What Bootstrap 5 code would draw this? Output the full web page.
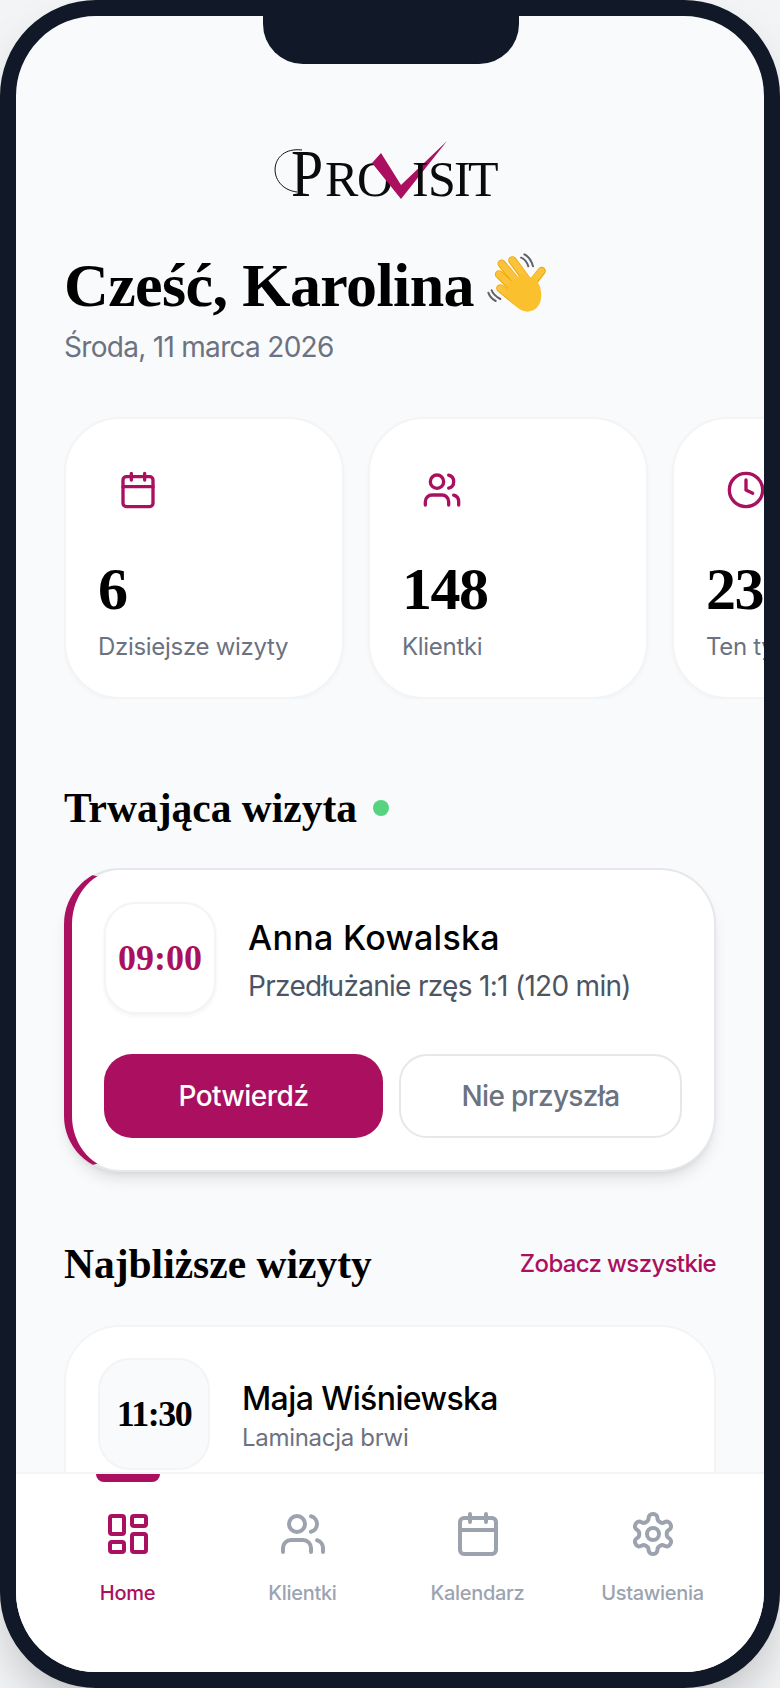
<!DOCTYPE html>
<html lang="pl">
<head>
<meta charset="utf-8">
<title>Provisit</title>
<link href="https://cdn.jsdelivr.net/npm/bootstrap@5.3.0/dist/css/bootstrap.min.css" rel="stylesheet">
<style>
:root{--brand:#ab0f5f;--sans:"Inter","Noto Sans",sans-serif;--serif:"Liberation Serif",serif;}
html,body{margin:0;height:100%;background:#f3f4f6;overflow:hidden;}
.phone{position:relative;width:780px;height:1688px;border:16px solid #111827;border-radius:96px;background:#f9fafb;box-shadow:0 25px 50px -12px rgba(0,0,0,.25);overflow:hidden;font-family:var(--sans);color:#000;}
.notch{position:absolute;top:0;left:247px;width:256px;height:48px;background:#111827;border-radius:0 0 40px 40px;z-index:5;}
.scroll-area{flex:1 1 0;min-height:0;overflow:hidden;padding:114px 48px 0 48px;}
.logo{display:block;margin:0 0 39px 196px;width:250px;height:80px;}
.logo-ink{font-family:var(--serif);fill:#0b0b0b;}
.hello{font-family:var(--serif);font-weight:700;font-size:62px;line-height:72px;margin:0;letter-spacing:-.6px;}
.hand{width:90px;height:80px;margin:-8px 0 0 -3px;flex:none;}
.dateline{font-size:28px;line-height:40px;color:#6b7280;margin:6px 0 50px;letter-spacing:-.7px;}
.stats{margin-right:-48px;gap:24px;overflow:hidden;}
.stat-tile{flex:0 0 280px;height:282px;border:2px solid #f3f4f6;border-radius:56px;padding:32px;box-shadow:0 2px 4px rgba(0,0,0,.03);background:#fff;}
.stat-ico{width:80px;height:80px;}
.stat-num{font-family:var(--serif);font-weight:700;font-size:60px;line-height:72px;margin-top:25px;letter-spacing:-1.5px;}
.stat-lbl{font-size:24px;line-height:36px;color:#6b7280;margin-top:4px;white-space:nowrap;letter-spacing:-.3px;}
.sec-title{font-family:var(--serif);font-weight:700;font-size:41.5px;line-height:48px;margin:0;}
.sec-live{margin-top:85px;margin-bottom:36px;gap:16px;}
.live-dot{width:16px;height:16px;border-radius:50%;background:#55d37f;}
.live-tile{border:2px solid #e5e7eb;border-left:8px solid var(--brand);border-radius:56px;padding:32px;height:304px;background:#fff;box-shadow:0 10px 15px -3px rgba(0,0,0,.1),0 4px 6px -4px rgba(0,0,0,.1);}
.time-box{flex:none;width:112px;height:112px;border-radius:32px;border:2px solid #f3f4f6;font-family:var(--serif);font-weight:700;font-size:36px;}
.time-live{background:#fff;color:var(--brand);box-shadow:0 2px 4px rgba(0,0,0,.05);}
.time-next{background:#f9fafb;color:#000;letter-spacing:-1.5px;}
.who{font-size:34px;line-height:44px;font-weight:500;letter-spacing:.3px;}
.what{font-size:28px;line-height:40px;color:#4b5563;letter-spacing:-.7px;margin-top:6px;}
.info{margin-top:6px;}
.act-row{gap:16px;margin-top:40px;}
.act{flex:1 1 0;height:84px;border-radius:28px;font-size:28px;font-weight:500;letter-spacing:-.5px;display:flex;align-items:center;justify-content:center;padding:0;}
.act-main,.act-main:hover{background:var(--brand);border:0;color:#fff;}
.act-ghost,.act-ghost:hover{background:#fff;border:2px solid #e5e7eb;color:#6b7280;letter-spacing:-.65px;}
.sec-next{margin-top:68px;margin-bottom:37px;}
.see-all{font-size:24px;font-weight:500;color:var(--brand);text-decoration:none;letter-spacing:-.65px;}
.next-tile{border:2px solid #f3f4f6;border-radius:56px;padding:31px 32px;background:#fff;height:200px;}
.next-tile .sec-title{letter-spacing:-.2px;}
.who-sm{font-size:32px;line-height:42px;font-weight:500;letter-spacing:-.6px;}
.what-sm{font-size:24px;line-height:36px;color:#6b7280;letter-spacing:-.3px;}
.info-sm{margin-top:6px;}
.tabbar{flex:none;height:200px;background:#fff;border-top:2px solid #f3f4f6;padding:0 24px;}
.tab{position:relative;flex:1 1 0;color:#9ca3af;text-decoration:none;padding-top:36px;}
.tab svg{display:block;margin:0 auto;}
.tab-lbl{display:block;text-align:center;font-size:20px;line-height:28px;font-weight:500;margin-top:21px;letter-spacing:-.3px;}
.tab-on{color:var(--brand);}
.tab-mark{position:absolute;top:0;left:56px;width:64px;height:8px;background:var(--brand);border-radius:0 0 8px 8px;}
svg.ln{fill:none;stroke:currentColor;stroke-width:2;stroke-linecap:round;stroke-linejoin:round;}
.brand-ink{color:var(--brand);}
</style>
</head>
<body>
<div class="phone d-flex flex-column">
  <div class="notch"></div>
  <main class="scroll-area">
    <svg class="logo" viewBox="0 0 250 80">
      <path d="M42 20C8 16 6 58 37 62" fill="none" stroke="#111" stroke-width="1"/>
      <text class="logo-ink" transform="translate(31 66) scale(.85 1)" font-size="68">P</text>
      <text class="logo-ink" x="65 97" y="66" font-size="50">RO</text>
      <polygon points="112,33 121,23 141,55 187,11 141,69" fill="#ab0f5f"/>
      <text class="logo-ink" x="152 168 194 208" y="66" font-size="50">ISIT</text>
    </svg>
    <div class="d-flex align-items-center">
      <h1 class="hello">Cześć, Karolina</h1>
      <svg class="hand" viewBox="0 0 270 240" role="img" aria-label="👋">
        <g fill="none" stroke-linecap="round">
          <g stroke="#5f6368" stroke-width="6"><path d="M150 50Q165 55 172 76"/><path d="M160 40Q178 48 186 76"/><path d="M52 155Q58 172 74 180"/><path d="M62 148Q66 162 88 174"/></g>
          <g stroke="#eda600" stroke-width="25"><path d="M136 122L92 68"/><path d="M168 118L124 58"/><path d="M130 145L84 100"/><path d="M135 180L88 142"/><path d="M182 128L212 90"/></g>
          <g stroke="#fbc23c" stroke-width="20"><path d="M136 120L92 68"/><path d="M168 116L124 58"/><path d="M130 143L84 100"/><path d="M135 178L88 142"/><path d="M182 126L211 90"/></g>
        </g>
        <path d="M112 130L150 100L195 115C222 150 215 210 170 212C145 210 125 190 105 165Z" fill="#fbc02d"/>
      </svg>
    </div>
    <p class="dateline">Środa, 11 marca 2026</p>

    <div class="stats d-flex">
      <div class="stat-tile card flex-column">
        <div class="stat-ico d-flex align-items-center justify-content-center brand-ink">
          <svg class="ln" width="40" height="40" viewBox="0 0 24 24"><rect x="3" y="4" width="18" height="18" rx="2"/><path d="M16 2v4M8 2v4M3 10h18"/></svg>
        </div>
        <div class="stat-num">6</div>
        <div class="stat-lbl">Dzisiejsze wizyty</div>
      </div>
      <div class="stat-tile card flex-column">
        <div class="stat-ico d-flex align-items-center justify-content-center brand-ink">
          <svg class="ln" width="40" height="40" viewBox="0 0 24 24"><path d="M16 21v-2a4 4 0 0 0-4-4H6a4 4 0 0 0-4 4v2"/><circle cx="9" cy="7" r="4"/><path d="M22 21v-2a4 4 0 0 0-3-3.87"/><path d="M16 3.13a4 4 0 0 1 0 7.75"/></svg>
        </div>
        <div class="stat-num">148</div>
        <div class="stat-lbl">Klientki</div>
      </div>
      <div class="stat-tile card flex-column">
        <div class="stat-ico d-flex align-items-center justify-content-center brand-ink">
          <svg class="ln" width="40" height="40" viewBox="0 0 24 24"><circle cx="12" cy="12" r="10"/><path d="M12 6v6l4 2"/></svg>
        </div>
        <div class="stat-num">23</div>
        <div class="stat-lbl">Ten tydzień</div>
      </div>
    </div>

    <div class="sec-live d-flex align-items-center">
      <h2 class="sec-title">Trwająca wizyta</h2>
      <span class="live-dot"></span>
    </div>
    <div class="live-tile card">
      <div class="d-flex align-items-center">
        <div class="time-box time-live d-flex align-items-center justify-content-center">09:00</div>
        <div class="info ms-4 ps-2">
          <div class="who">Anna Kowalska</div>
          <div class="what">Przedłużanie rzęs 1:1 (120 min)</div>
        </div>
      </div>
      <div class="act-row d-flex">
        <button type="button" class="btn act act-main">Potwierdź</button>
        <button type="button" class="btn act act-ghost">Nie przyszła</button>
      </div>
    </div>

    <div class="sec-next d-flex align-items-center justify-content-between">
      <h2 class="sec-title">Najbliższe wizyty</h2>
      <a href="#" class="see-all">Zobacz wszystkie</a>
    </div>
    <div class="next-tile card">
      <div class="d-flex align-items-center">
        <div class="time-box time-next d-flex align-items-center justify-content-center">11:30</div>
        <div class="info-sm ms-4 ps-2">
          <div class="who-sm">Maja Wiśniewska</div>
          <div class="what-sm">Laminacja brwi</div>
        </div>
      </div>
    </div>
  </main>
  <nav class="tabbar d-flex">
    <a href="#" class="tab tab-on">
      <span class="tab-mark"></span>
      <svg class="ln" width="48" height="48" viewBox="0 0 24 24"><rect x="3" y="3" width="7" height="9" rx="1"/><rect x="14" y="3" width="7" height="5" rx="1"/><rect x="14" y="12" width="7" height="9" rx="1"/><rect x="3" y="16" width="7" height="5" rx="1"/></svg>
      <span class="tab-lbl">Home</span>
    </a>
    <a href="#" class="tab">
      <svg class="ln" width="48" height="48" viewBox="0 0 24 24"><path d="M16 21v-2a4 4 0 0 0-4-4H6a4 4 0 0 0-4 4v2"/><circle cx="9" cy="7" r="4"/><path d="M22 21v-2a4 4 0 0 0-3-3.87"/><path d="M16 3.13a4 4 0 0 1 0 7.75"/></svg>
      <span class="tab-lbl">Klientki</span>
    </a>
    <a href="#" class="tab">
      <svg class="ln" width="48" height="48" viewBox="0 0 24 24"><rect x="3" y="4" width="18" height="18" rx="2"/><path d="M16 2v4M8 2v4M3 10h18"/></svg>
      <span class="tab-lbl">Kalendarz</span>
    </a>
    <a href="#" class="tab">
      <svg class="ln" width="48" height="48" viewBox="0 0 24 24"><path d="M12.22 2h-.44a2 2 0 0 0-2 2v.18a2 2 0 0 1-1 1.73l-.43.25a2 2 0 0 1-2 0l-.15-.08a2 2 0 0 0-2.73.73l-.22.38a2 2 0 0 0 .73 2.73l.15.1a2 2 0 0 1 1 1.72v.51a2 2 0 0 1-1 1.74l-.15.09a2 2 0 0 0-.73 2.73l.22.38a2 2 0 0 0 2.73.73l.15-.08a2 2 0 0 1 2 0l.43.25a2 2 0 0 1 1 1.73V20a2 2 0 0 0 2 2h.44a2 2 0 0 0 2-2v-.18a2 2 0 0 1 1-1.73l.43-.25a2 2 0 0 1 2 0l.15.08a2 2 0 0 0 2.73-.73l.22-.39a2 2 0 0 0-.73-2.73l-.15-.08a2 2 0 0 1-1-1.74v-.5a2 2 0 0 1 1-1.74l.15-.09a2 2 0 0 0 .73-2.73l-.22-.38a2 2 0 0 0-2.73-.73l-.15.08a2 2 0 0 1-2 0l-.43-.25a2 2 0 0 1-1-1.73V4a2 2 0 0 0-2-2z"/><circle cx="12" cy="12" r="3"/></svg>
      <span class="tab-lbl">Ustawienia</span>
    </a>
  </nav>
</div>
<script src="https://cdn.jsdelivr.net/npm/bootstrap@5.3.0/dist/js/bootstrap.bundle.min.js"></script>
</body>
</html>
